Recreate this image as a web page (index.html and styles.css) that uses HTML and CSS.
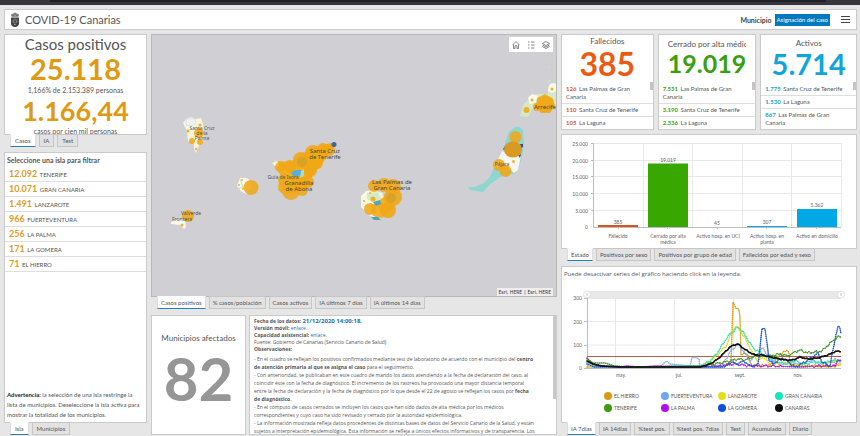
FILE: index.html
```html
<!DOCTYPE html>
<html lang="es">
<head>
<meta charset="utf-8">
<title>COVID-19 Canarias</title>
<link rel="stylesheet" href="styles.css">
</head>
<body>
<div class="topstrip"><div class="topstrip-tab"></div></div>
<div class="app">
  <header class="header panel">
    <svg class="crest" viewBox="0 0 10 16" aria-hidden="true">
      <path d="M1 4 Q0.500 1.500 3 1.500 Q5 -0.500 7 1.500 Q9.500 1.500 9 4 L8 5 H2Z" fill="#999"/>
      <path d="M2 2.500 L3 4 L5 1.500 L7 4 L8 2.500" fill="none" stroke="#555" stroke-width=".7"/>
      <path d="M1 5.500 H9 V12 Q8.500 14.500 5 15 Q1.500 14.500 1 12Z" fill="#444"/>
      <path d="M3.200 7.500 V11 M5 6.500 V9 M6.800 7.500 V11 M4 12.500 H6 M5 10 V11.500" stroke="#aaa" stroke-width=".7"/>
    </svg>
    <h1>COVID-19 Canarias</h1>
    <span class="muni-label" id="muni">Municipio</span>
    <button class="assign" aria-describedby="muni">Asignación del caso</button>
    <button class="menu" aria-label="Menú"><svg viewBox="0 0 9 9"><path d="M0 1.500H9M0 4.500H9M0 7.500H9" stroke="#444" stroke-width="1"/></svg></button>
  </header>

  <main class="columns">
    <div class="col left">
      <section class="summary">
        <div class="panel summary-body">
          <h2>Casos positivos</h2>
          <div class="total">25.118</div>
          <p>1,166% de 2.153.389 personas</p>
          <div class="rate">1.166,44</div>
          <p>casos por cien mil personas</p>
        </div>
        <nav class="tabs"><button class="tab on">Casos</button><button class="tab">IA</button><button class="tab">Test</button></nav>
      </section>
      <section class="islands">
        <div class="panel islands-body">
          <h3>Seleccione una isla para filtrar</h3>
          <ul class="rows">
            <li><b>12.092</b> TENERIFE</li>
            <li><b>10.071</b> GRAN CANARIA</li>
            <li><b>1.491</b> LANZAROTE</li>
            <li><b>966</b> FUERTEVENTURA</li>
            <li><b>256</b> LA PALMA</li>
            <li><b>171</b> LA GOMERA</li>
            <li><b>71</b> EL HIERRO</li>
          </ul>
          <p class="warning"><b>Advertencia:</b> la selección de una isla restringe la lista de municipios. Deseleccione la isla activa para mostrar la totalidad de los municipios.</p>
        </div>
        <nav class="tabs"><button class="tab on">Isla</button><button class="tab">Municipios</button></nav>
      </section>
    </div>

    <div class="col center">
      <section class="mapbox">
        <div class="map">
          <svg class="map-art" viewBox="152 35 404 261" preserveAspectRatio="xMidYMid slice" role="img" aria-label="Mapa de Canarias">
            <!-- La Palma -->
            <path d="M183 123L186 119L191 117L196 119L201 118L203 124L204 132L203 141L199 145L196 153L194 149L194 144L188 141L187 131Z" fill="#f8f5dc"/>
            <path d="M186 120L190 118L195 119L196 123L192 126L186 125Z" fill="#f0f1f2" stroke="#ccd" stroke-width=".5"/>
            <g class="case"><circle cx="199" cy="133" r="5"/><circle cx="192" cy="141" r="3"/><circle cx="200" cy="142" r="3"/><circle cx="200" cy="125" r="1.500"/><circle cx="188" cy="131" r="1.500"/><circle cx="196" cy="149" r="1.200"/></g>
            <!-- La Gomera -->
            <path d="M237 186L240 178L246 178L250 180L252 187L246 194L241 191Z" fill="#f8f8ec"/>
            <path d="M240 179L243 187L239 188" fill="none" stroke="#b9dba8" stroke-width=".8"/>
            <g class="case"><circle cx="251" cy="187.500" r="7.500"/><circle cx="242" cy="180" r="1"/><circle cx="239" cy="185" r="1"/><circle cx="243" cy="189" r="1"/></g>
            <!-- El Hierro -->
            <path d="M171 222L176 220L185 219L186 227L184 229L180 225L171 224Z" fill="#f8f8ec"/>
            <g class="case"><circle cx="188" cy="216" r="6"/><circle cx="182" cy="225" r="1.500"/></g>
            <!-- Tenerife -->
            <path d="M272 163L279 161L291 162L308 150L330 143L335 143L325 160L313 175L305 190L291 194L281 184L280 174Z" fill="#f1ae22"/>
            <path d="M272 163L277 161L279 164L277 169Z" fill="#f8f8ec"/>
            <g class="case"><circle cx="280" cy="167" r="5"/><circle cx="290" cy="166" r="6"/><circle cx="301" cy="160" r="8"/><circle cx="313" cy="153" r="8"/><circle cx="307" cy="161" r="7"/><circle cx="323" cy="149" r="6"/><circle cx="329" cy="150" r="6"/><circle cx="310" cy="170" r="7"/><circle cx="317" cy="163" r="6"/><circle cx="284" cy="180" r="6"/><circle cx="291" cy="191" r="9"/><circle cx="285" cy="187" r="7"/><circle cx="302" cy="190" r="6"/><circle cx="308" cy="182" r="6"/><circle cx="298" cy="181" r="7"/></g>
            <circle cx="302" cy="162" r="5" fill="#d9a02a"/>
            <path d="M291 173L295 170L302 170L301 175L294 177Z" fill="#56aede"/>
            <path d="M301 171L304 169L304 176L300 178Z" fill="#a6dfc5"/>
            <circle cx="334" cy="144.500" r="2.500" fill="#3269a5"/>
            <!-- Gran Canaria -->
            <path d="M361 196L366 191L373 190L382 193L386 205L380 219L370 216L361 207Z" fill="#f8f8e0"/>
            <path d="M367 193L378 192L381 198L374 203L367 199Z" fill="#d5ecc3"/>
            <g class="case"><circle cx="374" cy="186" r="6"/><circle cx="384" cy="185" r="7"/><circle cx="393" cy="187" r="8"/><circle cx="393" cy="197" r="9"/><circle cx="386" cy="205" r="8"/><circle cx="388" cy="210" r="8"/><circle cx="379" cy="210" r="8"/><circle cx="370" cy="209" r="6"/><circle cx="373" cy="199" r="2.500"/><circle cx="364" cy="201" r="1"/><circle cx="370" cy="193" r="1"/></g>
            <circle cx="391" cy="198" r="5" fill="#dca128"/>
            <path d="M373 202L380 200L381 204L376 206ZM371 217L378 217L381 220L374 220Z" fill="#49a6cb"/>
            <!-- Fuerteventura -->
            <path d="M515 127L520 127L523 130L524 145L522 157L518 170L514 174L507 174L499 178L490 184L483 192L470 190L468 187L475 187L484 183L490 177L493 170L498 160L503 150L506 140L509 132Z" fill="#8fd5d0"/>
            <path d="M502 151L521 156L518 170L514 173L505 165L494 168Z" fill="#f7f7f2"/>
            <path d="M503 149L506 145L506 151ZM520 144H523V147L521 148ZM518 155L521 154L520 158Z" fill="#304f9c"/>
            <g class="case"><circle cx="515.500" cy="137" r="6"/><circle cx="499" cy="165" r="6"/><circle cx="505.500" cy="171" r="6"/><circle cx="513.500" cy="161.500" r="1.500"/></g>
            <ellipse cx="513" cy="149.500" rx="9" ry="8" fill="#d89a22"/>
            <!-- Lanzarote -->
            <path d="M520 116L523 105L530 98L536 94L548 94L548 88L551 83L556 83V104L545 110L532 109L528 117Z" fill="#d6e8c5"/>
            <path d="M528 98L532 94L538 96L536 102L530 104ZM549 85L552 83L556 84V91L552 93L548 91Z" fill="#fafaec"/>
            <path d="M549 79L551 81L548 82ZM548 66L550 67L549 68Z" fill="#d6e8c5"/>
            <g class="case"><path d="M537 98L545 94L553 99L555 106L550 113L541 113L536 108Z"/><circle cx="546" cy="104" r="8"/><circle cx="537" cy="107" r="4"/><circle cx="526.500" cy="110" r="3"/><circle cx="532" cy="100" r="1.500"/><circle cx="552" cy="89" r="1.500"/></g>
            <g class="place">
              <text x="202" y="130">Santa Cruz</text><text x="202" y="135">de la</text><text x="202" y="140">Palma</text>
              <text x="191" y="215">Valverde</text><text x="182" y="221">Frontera</text>
              <text x="283" y="179">Guía de Isora</text>
              <text x="502" y="166">Pájara</text>
            </g>
            <g class="place big">
              <text x="325" y="153">Santa Cruz</text><text x="325" y="159">de Tenerife</text>
              <text x="299" y="185">Granadilla</text><text x="299" y="191">de Abona</text>
              <text x="392" y="184">Las Palmas de</text><text x="392" y="190">Gran Canaria</text>
              <text x="545" y="109">Arrecife</text>
            </g>
          </svg>
          <div class="map-tools">
            <button aria-label="Inicio"><svg viewBox="0 0 10 10"><path d="M1.500 5L5 1.500L8.500 5M2.500 4.500V8.500H4V6Q5 4.500 6 6V8.500H7.500V4.500"/></svg></button>
            <button aria-label="Leyenda"><svg viewBox="0 0 10 10"><path d="M2 2H3.500M2 5H3.500M2 8H3.500M5 2H8.500M5 5H8.500M5 8H8.500"/></svg></button>
            <button aria-label="Capas"><svg viewBox="0 0 10 10"><path d="M5 1.500L8.500 3.500L5 5.500L1.500 3.500ZM1.500 5L5 7L8.500 5M1.500 6.500L5 8.500L8.500 6.500"/></svg></button>
          </div>
          <div class="attribution">Esri, HERE | Esri, HERE</div>
        </div>
        <nav class="tabs"><button class="tab on">Casos positivos</button><button class="tab">% casos/población</button><button class="tab">Casos activos</button><button class="tab">IA últimos 7 días</button><button class="tab">IA últimos 14 días</button></nav>
      </section>
      <div class="bottom">
        <section class="panel affected"><h2>Municipios afectados</h2><div class="count">82</div></section>
        <section class="panel info">
          <div class="info-head">
            <p><b>Fecha de los datos:</b> <a href="#" class="date">21/12/2020 14:00:18.</a></p>
            <p><b>Versión móvil:</b> <a href="#">enlace.</a></p>
            <p><b>Capacidad asistencial:</b> <a href="#">enlace.</a></p>
            <p>Fuente: Gobierno de Canarias (Servicio Canario de Salud)</p>
            <p><b>Observaciones:</b></p>
          </div>
          <p>- En el cuadro se reflejan los positivos confirmados mediante test de laboratorio de acuerdo con el municipio del <b>centro<br>de atención primaria al que se asigna el caso</b> para el seguimiento.</p>
          <p>- Con anterioridad, se publicaban en este cuadro de mando los datos atendiendo a la fecha de declaración del caso, al<br>coincidir éste con la fecha de diagnóstico. El incremento de los rastreos ha provocado una mayor distancia temporal<br>entre la fecha de declaración y la fecha de diagnóstico por lo que desde el 22 de agosto se reflejan los casos por <b>fecha<br>de diagnóstico</b>.</p>
          <p>- En el cómputo de casos cerrados se incluyen los casos que han sido dados de alta médica por los médicos<br>correspondientes y cuyo caso ha sido revisado y cerrado por la autoridad epidemiológica.</p>
          <p>- La información mostrada refleja datos procedentes de distintas bases de datos del Servicio Canario de la Salud, y están<br>sujetos a interpretación epidemiológica. Esta información se refleja a únicos efectos informativos y de transparencia. Los</p>
          <div class="scroll"></div>
        </section>
      </div>
    </div>

    <div class="col right">
      <div class="kpis">
        <section class="panel kpi red">
          <h2>Fallecidos</h2><div class="num">385</div>
          <ul><li><b>126</b> Las Palmas de Gran Canaria</li><li><b>110</b> Santa Cruz de Tenerife</li><li><b>105</b> La Laguna</li></ul>
          <div class="thumb"></div>
        </section>
        <section class="panel kpi green">
          <h2>Cerrado por alta médica</h2><div class="num">19.019</div>
          <ul><li><b>7.531</b> Las Palmas de Gran Canaria</li><li><b>3.190</b> Santa Cruz de Tenerife</li><li><b>2.336</b> La Laguna</li></ul>
          <div class="thumb"></div>
        </section>
        <section class="panel kpi blue">
          <h2>Activos</h2><div class="num">5.714</div>
          <ul><li><b>1.775</b> Santa Cruz de Tenerife</li><li><b>1.530</b> La Laguna</li><li><b>867</b> Las Palmas de Gran Canaria</li></ul>
          <div class="thumb"></div>
        </section>
      </div>
      <section class="status">
        <div class="panel status-body">
          <svg class="chart" viewBox="562 135 294 113" role="img" aria-label="Casos por estado">
            <path class="grid" d="M593 143.500H841M593 160.500H841M593 176.500H841M593 193.500H841M593 210.500H841M643.500 143V227M692.500 143V227M742.500 143V227M791.500 143V227M841.500 143V227"/>
            <path class="axis" d="M593.500 143V227.500H841M591 143.500H593M591 160.500H593M591 176.500H593M591 193.500H593M591 210.500H593M618.500 227V229M667.500 227V229M717.500 227V229M766.500 227V229M816.500 227V229"/>
            <rect x="598" y="225" width="40" height="2" fill="#d9541e"/>
            <rect x="648" y="163.500" width="40" height="63.500" fill="#38a800"/>
            <rect x="747" y="226" width="40" height="1" fill="#00a9e6"/>
            <rect x="797" y="209" width="40" height="18" fill="#00a9e6"/>
            <g class="ticks"><text x="588" y="146">25.000</text><text x="588" y="163">20.000</text><text x="588" y="179">15.000</text><text x="588" y="196">10.000</text><text x="588" y="213">5.000</text><text x="588" y="229">0</text></g>
            <g class="labels"><text x="618" y="224">385</text><text x="668" y="162">19.019</text><text x="717" y="225">45</text><text x="767" y="224">307</text><text x="817" y="207">5.362</text>
            <text x="618" y="238">Fallecido</text><text x="668" y="238">Cerrado por alta</text><text x="668" y="244">médica</text><text x="718" y="238">Activo hosp. en UCI</text><text x="767" y="238">Activo hosp. en</text><text x="767" y="244">planta</text><text x="817" y="238">Activo en domicilio</text></g>
          </svg>
        </div>
        <nav class="tabs"><button class="tab on">Estado</button><button class="tab">Positivos por sexo</button><button class="tab">Positivos por grupo de edad</button><button class="tab">Fallecidos por edad y sexo</button></nav>
      </section>
      <section class="trend">
        <div class="panel trend-body">
          <p>Puede desactivar series del gráfico haciendo click en la leyenda.</p>
          <svg class="chart" viewBox="562 288 294 92" role="img" aria-label="Incidencia acumulada a 7 días">
            <rect x="587" y="291" width="254" height="7" fill="#e8e8e8"/>
            <path class="grid" d="M587 298.500H841M587 321.500H841M587 345H841M615.500 298V368M674.500 298V368M733.500 298V368M792.500 298V368"/>
            <path class="axis" d="M587.500 298V368.500H841M584 298.500H587M584 321.500H587M584 345.500H587M584 368.500H587"/>
            <rect x="587" y="356" width="254" height="1" fill="#b5604e"/>
            <g class="knob"><circle cx="587" cy="294.500" r="3.500"/><circle cx="841" cy="294.500" r="3.500"/><path d="M586.500 293V296M587.500 293V296M840.500 293V296M841.500 293V296"/></g>
            <g id="series"></g>
            <g class="ticks"><text x="582" y="300">300</text><text x="582" y="324">200</text><text x="582" y="347">100</text><text x="582" y="370">0</text></g>
            <g class="labels"><text x="621" y="377">may.</text><text x="679" y="377">jul.</text><text x="740" y="377">sept.</text><text x="798" y="377">nov.</text></g>
          </svg>
          <ul class="legend">
            <li><i class="c1"></i>EL HIERRO</li><li><i class="c2"></i>FUERTEVENTURA</li><li><i class="c3"></i>LANZAROTE</li><li><i class="c4"></i>GRAN CANARIA</li>
            <li><i class="c5"></i>TENERIFE</li><li><i class="c6"></i>LA PALMA</li><li><i class="c7"></i>LA GOMERA</li><li><i class="c8"></i>CANARIAS</li>
          </ul>
        </div>
        <nav class="tabs"><button class="tab on">IA 7días</button><button class="tab">IA 14días</button><button class="tab">%test pos.</button><button class="tab">%test pos. 7días</button><button class="tab">Test</button><button class="tab">Acumulado</button><button class="tab">Diario</button></nav>
      </section>
    </div>
  </main>
</div>
<script src="chart.js"></script>
</body>
</html>
```
FILE: styles.css
```css
* { box-sizing: border-box; }
body { margin: 0; background: #e6e6e6; color: #555; font: 6px/8px Lato, "Liberation Sans", sans-serif; min-height: 100vh; display: flex; flex-direction: column; }
h1, h2, h3, p, ul { margin: 0; padding: 0; font-weight: 400; }
ul { list-style: none; }
button { font: inherit; color: inherit; border: 0; padding: 0; background: none; white-space: nowrap; }
a { color: #1a6fae; text-decoration: none; }
b { font-weight: 700; }
.topstrip { height: 5px; background: #37363c; padding: 0 34px 0 50px; }
.topstrip-tab { height: 2px; background: #202024; }
.app { flex: 1; display: flex; flex-direction: column; gap: 4px; padding: 4px 3px 1px 4px; }
.panel { background: #fff; border: 1px solid #cacaca; }

.header { display: flex; align-items: center; height: 21px; padding: 0 6px 0 5px; }
.crest { width: 10px; height: 16px; }
.header h1 { font-size: 11px; line-height: 16px; margin-left: 5px; flex: 1; }
.muni-label { font-size: 7px; font-weight: 700; color: #444; }
.assign { background: #0079c1; color: #fff; height: 12px; padding: 0 2px; margin: 0 11px 0 3px; }
.menu, .menu svg { width: 9px; height: 9px; display: block; }

.columns { flex: 1; display: grid; grid-template-columns: 143fr 406fr 296fr; gap: 4px; }
.col { display: flex; flex-direction: column; min-width: 0; gap: 5px; }
.tabs { display: flex; gap: 3px; padding-left: 6px; height: 13px; position: relative; z-index: 1; margin-top: -1px; font-size: 6px; }
.tab { background: #e2e2e2; border: 1px solid #c6c6c6; padding: 0 3px; height: 13px; }
.tab.on { background: #fff; border-color: #fff #ddd #2680b5; }
.left .tab { padding: 0 4px; }

.summary-body { height: 101px; text-align: center; overflow: hidden; }
.summary-body h2 { font-size: 15px; line-height: 18px; }
.total { color: #e09a12; font-size: 29px; line-height: 32px; font-weight: 700; }
.summary-body p { font-size: 7px; line-height: 10px; }
.rate { color: #e09a12; font-size: 27px; line-height: 31px; font-weight: 700; }
.islands { flex: 1; display: flex; flex-direction: column; }
.islands-body { flex: 1; padding: 3px 0 2px; display: flex; flex-direction: column; }
.islands-body h3 { font-weight: 700; padding: 0 2px 2px; line-height: 9px; }
.rows li { height: 15px; line-height: 14px; padding-left: 4px; border-bottom: 1px solid #ddd; font-size: 6px; }
.rows b { color: #dc9c1e; font-size: 9px; margin-right: 1px; }
.warning { margin-top: auto; padding: 0 2px; line-height: 10px; }
.warning b { color: #222; }

.center { gap: 6px; }
.mapbox { flex: 1; display: flex; flex-direction: column; }
.map { flex: 1; min-height: 240px; border: 1px solid #b8b8b8; background: #cfcfd4; position: relative; overflow: hidden; }
.map-art { position: absolute; inset: 0; width: 100%; height: 100%; display: block; }
.case { fill: #f0a716; fill-opacity: .88; }
.place { font: 5px "Noto Sans", sans-serif; fill: #565656; text-anchor: middle; }
.place.big { font-size: 6px; fill: #4c4634; }
.map-tools { position: absolute; top: 2px; right: 3px; display: flex; background: #fff; height: 15px; width: 44px; justify-content: space-around; align-items: center; }
.map-tools svg { width: 10px; height: 10px; display: block; fill: none; stroke: #666; stroke-width: .8; }
.attribution { position: absolute; right: 3px; bottom: 0; background: #eeeef0; color: #333; padding: 0 2px; font: 5px/8px "Noto Sans", sans-serif; }
.bottom { display: grid; grid-template-columns: 95fr 308fr; gap: 3px; height: 120px; }
.affected { text-align: center; padding-top: 16px; overflow: hidden; }
.affected h2 { font-size: 8px; line-height: 12px; white-space: nowrap; }
.count { font-size: 60px; line-height: 68px; font-weight: 700; color: #969696; }
.info { font-family: "Open Sans", sans-serif; font-size: 5px; line-height: 8px; padding: 2px 4px; overflow: hidden; position: relative; white-space: nowrap; }
.info-head { line-height: 7px; padding-bottom: 2px; }
.date { font-weight: 700; font-size: 6px; }
.scroll { position: absolute; right: 0; top: 0; width: 3px; height: 83px; background: #c8c8c8; }

.kpis { display: grid; grid-template-columns: 93fr 99fr 97fr; gap: 4px; height: 96px; margin-bottom: -1px; }
.kpi { text-align: center; position: relative; overflow: hidden; display: flex; flex-direction: column; }
.kpi h2 { font-size: 8px; line-height: 12px; white-space: nowrap; overflow: hidden; margin: 0 9px; }
.kpi .num { font-weight: 700; }
.kpi ul { margin-top: auto; text-align: left; font-size: 6px; line-height: 8px; }
.kpi li { padding: 2px 8px 2px 4px; border-bottom: 1px solid #ddd; }
.kpi li:last-child { border: 0; }
.kpi li b { margin-right: 1px; }
.thumb { position: absolute; right: 0; top: 47px; width: 3px; height: 8px; background: #c4c4c4; }
.red .num { color: #ec5a12; font-size: 32px; line-height: 34px; }
.green h2 { padding-top: 3px; }
.green .num { color: #38a010; font-size: 25px; line-height: 26px; }
.blue h2 { padding-top: 2px; }
.blue .num { color: #12a4dc; font-size: 29px; line-height: 30px; }
.red li b { color: #d9541e; }
.green li b { color: #38a010; }
.blue li b { color: #1a9fc4; }

.chart { display: block; width: 100%; }
.grid { fill: none; stroke: #e8e8e8; }
.axis { fill: none; stroke: #bdbdbd; }
.ticks, .labels { font-size: 5px; fill: #666; }
.ticks { text-anchor: end; }
.labels { text-anchor: middle; }
.trend { flex: 1; display: flex; flex-direction: column; }
.trend-body { flex: 1; }
.trend-body p { padding: 3px 2px 9px; font: 6px/9px "Open Sans", sans-serif; }
.knob { fill: #fff; stroke: #ccc; stroke-width: .6; }
.line { fill: none; stroke-width: .5; stroke-linejoin: round; }
.dots { fill: none; stroke-width: 1.6; stroke-linecap: round; stroke-dasharray: 0 2; }
.line.solid { stroke-width: 1.5; }
.legend { display: grid; grid-template-columns: repeat(4, 57fr) 24fr; padding-left: 42px; row-gap: 4px; padding-top: 12px; }
.legend li { display: flex; align-items: center; gap: 2px; font-size: 5px; line-height: 8px; }
.legend li:nth-child(5) { grid-column: 1; }
.legend i { width: 8px; height: 8px; border-radius: 50%; }
.c1 { background: #d99a14; } .c2 { background: #6fa8f0; } .c3 { background: #e3e01a; } .c4 { background: #14e6ba; }
.c5 { background: #3c9a0e; } .c6 { background: #b60cec; } .c7 { background: #1050d8; } .c8 { background: #111; }
```
FILE: chart.js
```js
// Each series: colour, then x,y pairs in chart units.
const series = [
  ['#d99a14', '587,367 640,367 700,367 722,366 731,362 733,303 736,307 739,310 740,318 741,356 744,352 748,356 752,366 770,365 783,352 789,351 790,365 815,366 830,367 841,365'],
  ['#7fb0f0', '587,362 594,366 620,367 660,367 664,363 667,361 670,364 690,366 692,358 695,357 699,359 700,367 722,366 730,352 738,344 744,352 750,361 757,354 763,348 768,356 774,362 782,365 790,361 800,365 812,360 820,364 830,362 841,361'],
  ['#e3d81a', '587,364 598,366 620,367 700,367 712,360 720,352 727,345 731,333 736,326 741,332 746,340 752,352 758,361 764,357 770,365 785,363 805,367 825,365 832,361 841,364'],
  ['#2be0b4', '587,362 597,366 640,367 700,366 710,361 718,352 724,342 730,334 734,331 738,327 743,332 748,340 754,349 760,352 768,358 775,361 785,364 795,361 805,364 815,362 825,363 835,360 841,362'],
  ['#b60cec', '587,358 592,363 598,366 620,367 627,366 640,367 655,366 700,367 720,366 735,364 750,366 770,366 800,367 820,366 835,366 838,359 841,361'],
  ['#1f58cc', '587,364 594,367 640,367 725,367 731,362 737,364 744,361 750,366 758,365 760,347 762,328 765,330 767,342 769,360 773,364 782,358 787,361 795,367 805,362 818,353 822,362 830,366 834,345 836,334 838,326 840,329 841,334'],
  ['#3c8f1e', '587,359 593,363 605,363 615,366 630,367 700,366 715,364 730,361 737,359 745,360 755,356 770,356 780,354 788,356 795,352 800,350 808,353 822,351 828,345 835,339 839,336 841,338'],
  ['#111', '587,361 593,364 602,366 620,367 660,367 700,367 710,364 718,359 724,353 730,347 734,345 738,344 743,348 749,352 755,355 763,355 770,357 780,359 786,360 793,360 800,357 808,359 818,358 828,355 834,352 838,351 841,352']
];
const group = document.getElementById('series');
const ns = 'http://www.w3.org/2000/svg';

// Adds the day-to-day ripple between the key points of a series.
function daily(points, seed, amount) {
  const keys = points.split(' ').map(p => p.split(',').map(Number));
  const out = [];
  for (let i = 0; i < keys.length - 1; i++) {
    const [x0, y0] = keys[i], [x1, y1] = keys[i + 1];
    for (let x = x0; x < x1; x += 1) {
      const y = y0 + (y1 - y0) * (x - x0) / (x1 - x0);
      const ripple = x > 705 && y < 366.5 ? amount * Math.sin(x * 1.3 + seed * 2) * Math.cos(x * 0.47 + seed) : 0;
      out.push(x + ',' + Math.min(367.5, y + ripple).toFixed(1));
    }
  }
  out.push(keys[keys.length - 1].join(','));
  return out.join(' ');
}

series.forEach(([color, points], i) => {
  const black = color === '#111';
  const path = daily(points, i, black ? 0.6 : 1.4);
  ['line', 'dots'].forEach(kind => {
    const el = document.createElementNS(ns, 'polyline');
    el.setAttribute('points', path);
    el.setAttribute('stroke', color);
    el.setAttribute('class', kind + (black ? ' solid' : ''));
    group.appendChild(el);
  });
});
```
